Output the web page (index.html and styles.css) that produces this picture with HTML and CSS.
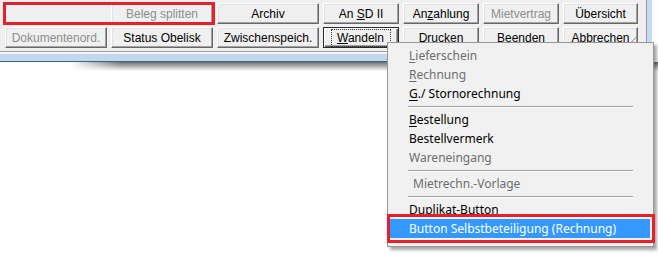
FILE: index.html
```html
<!DOCTYPE html>
<html lang="de">
<head>
<meta charset="UTF-8">
<title>Wandeln</title>
<link rel="stylesheet" href="styles.css">
</head>
<body>
<div class="app">
	<div class="top">
		<div class="toolbar">
			<div class="marked">
				<div class="blank"></div>
				<button disabled>Beleg splitten</button>
			</div>
			<button>Archiv</button>
			<button>An <u>S</u>D II</button>
			<button>An<u>z</u>ahlung</button>
			<button disabled>Mietvertrag</button>
			<button>Übersicht</button>
			<button disabled>Dokumentenord.</button>
			<button>Status Obelisk</button>
			<button>Zwischenspeich.</button>
			<button class="focused"><span><u>W</u>andeln</span></button>
			<button>Drucken</button>
			<button>Beenden</button>
			<button class="grip">Abbrechen</button>
		</div>
		<div class="frame-edge"></div>
	</div>
	<div class="band"></div>
	<div class="shade"></div>
</div>

<div class="menu">
	<div class="item off"><u>L</u>ieferschein</div>
	<div class="item off"><u>R</u>echnung</div>
	<div class="item"><u>G</u>./ Stornorechnung</div>
	<div class="sep"></div>
	<div class="item"><u>B</u>estellung</div>
	<div class="item">Bestellvermerk</div>
	<div class="item off">Wareneingang</div>
	<div class="sep"></div>
	<div class="item off indent">Mietrechn.-Vorlage</div>
	<div class="sep"></div>
	<div class="item">Duplikat-Button</div>
	<div class="item active">Button Selbstbeteiligung (Rechnung)</div>
</div>
</body>
</html>
```

FILE: styles.css
```css
html, body {margin:0; padding:0; background:#fff;}
body {width:658px; height:254px; overflow:hidden; position:relative;}

.top {display:flex; height:52px;}
.toolbar {width:641px; padding:3px 0 0 5px; background:#f0f0f0; border-bottom:1px solid #a0a0a0; display:grid; grid-template-columns:102px 102px 102px 76px 76px 76px 75px; grid-template-rows:21px 21px; column-gap:4px; row-gap:3px; align-content:start;}
.frame-edge {width:5px; background:#c7dcf1; border-left:1px solid #9a9a9a;}

button {font-family:"Liberation Sans", Arial, sans-serif; font-size:12px; color:#000; background:#f0f0f0; margin:0; padding:0; border:1px solid; border-color:#fff #696969 #696969 #fff; box-shadow:inset -1px -1px #a0a0a0, inset 1px 1px #e3e3e3; white-space:nowrap;}
button:disabled {color:#8d8d8d;}
button u {text-underline-offset:1px;}
button.focused {border-color:#2a2a2a; box-shadow:inset 1px 1px #fff, inset -1px -1px #696969, inset -2px -2px #a0a0a0;}
button.focused span {display:inline-block; padding:1px 6px 1px 5px; outline:1px dotted #333;}
button.grip {background:#f0f0f0 linear-gradient(135deg, transparent 88%, #b5b5b5 88%, #b5b5b5 90%, transparent 90%);}

.marked {grid-column:span 2; display:grid; grid-template-columns:102px 102px; column-gap:4px; position:relative;}
.marked::after {content:""; position:absolute; inset:-1px -2px -1px -2px; border:3px solid #e8202a;}
.blank {background:#f0f0f0;}

.band {width:652px; height:7px; background:#c3d8ee; border-top:2px solid #f6f6f6; border-bottom:1px solid #2f6a8c;}
.shade {height:9px; margin-left:70px; background:linear-gradient(#6f6f6f, rgba(255,255,255,0)); -webkit-mask-image:linear-gradient(to right, transparent, #000 50px); mask-image:linear-gradient(to right, transparent, #000 50px);}

.menu {position:absolute; left:387px; top:42px; width:260px; padding:3px 3px 8px 2px; background:#f1f1f1; border:1px solid #979797; box-shadow:3px 3px 3px rgba(0,0,0,0.35); font-family:"Noto Sans", "Open Sans", sans-serif; font-size:12px; color:#000;}
.item {height:19px; line-height:19px; padding-left:19px; white-space:nowrap;}
.item.off {color:#6d6d6d;}
.item.indent {padding-left:23px;}
.item u {text-underline-offset:2px;}
.item.active {background:#3399ff; color:#fff; position:relative;}
.item.active::after {content:""; position:absolute; inset:-5px -5px -5px -3px; border:3px solid #e8202a;}
.sep {height:7px; margin:0 17px 0 18px; background:linear-gradient(transparent 3px, #a0a0a0 3px, #a0a0a0 4px, #fff 4px, #fff 5px, transparent 5px);}
```
